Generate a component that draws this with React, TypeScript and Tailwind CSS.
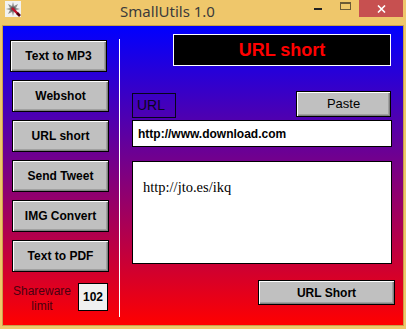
import type { ReactNode } from "react"

const bevel =
  "border border-black bg-[#c0c0c0] shadow-[inset_1px_1px_0_#ffffff,inset_-1px_-1px_0_#808080,inset_-2px_-2px_0_#a0a0a0] flex items-center justify-center text-black"

function SideButton({ children, first }: { children: ReactNode; first?: boolean }) {
  return (
    <div className={`${bevel} ${first ? "" : "ml-[2px]"} h-[32px] w-[97px] text-[12px] font-bold`}>
      {children}
    </div>
  )
}

function AppIcon() {
  return (
    <svg width="16" height="16" viewBox="0 0 16 16">
      <rect x="0" y="0" width="16" height="16" fill="#f2f2f2" />
      <path d="M8 1 L9 5 L13 3 L11 7 L15 8 L11 9 L13 13 L9 11 L8 15 L7 11 L3 13 L5 9 L1 8 L5 7 L3 3 L7 5 Z" fill="#8c8c8c" />
      <circle cx="8" cy="8" r="2.5" fill="#5f5f5f" />
      <path d="M7 7 L13 13" stroke="#c0102a" strokeWidth="2.4" />
      <path d="M12 12 L15 15" stroke="#500010" strokeWidth="2.6" />
    </svg>
  )
}

export default function App() {
  return (
    <div className="flex h-[329px] w-[406px] flex-col bg-[#efc76b] font-['Liberation_Sans',Arial,sans-serif]">
      {/* title bar */}
      <div className="relative flex h-[25px] items-start">
        <div className="ml-[5px] mt-[1px]">
          <AppIcon />
        </div>
        <div className="flex-1 pt-[2px] text-center font-['Noto_Sans',sans-serif] text-[15px] leading-[18px] text-[#3b3b3b]">
          SmallUtils 1.0
        </div>
        <div className="mr-[3px] flex items-start">
          <div className="mt-[8px] h-[2px] w-[8px] bg-[#222]" />
          <div className="ml-[18px] mt-[2px] h-[8px] w-[11px] border border-[#6b5a36] border-t-2" />
          <div className="ml-[8px] flex h-[17px] w-[44px] items-center justify-center bg-[#c75050]">
            <svg width="9" height="8" viewBox="0 0 9 8">
              <path d="M1 0.5 L8 7.5 M8 0.5 L1 7.5" stroke="#fff" strokeWidth="1.6" />
            </svg>
          </div>
        </div>
      </div>

      {/* client */}
      <div className="mx-[2px] border border-[#c9a04c]">
        <div className="flex h-[299px] w-[400px] bg-[linear-gradient(to_bottom,#0000ff,#ff0000)]">
          <div className="flex w-[116px] flex-col gap-[8px] pl-[7px] pt-[14px]">
            <SideButton first>Text to MP3</SideButton>
            <SideButton>Webshot</SideButton>
            <SideButton>URL short</SideButton>
            <SideButton>Send Tweet</SideButton>
            <SideButton>IMG Convert</SideButton>
            <SideButton>Text to PDF</SideButton>
            <div className="mt-[3px] flex items-start">
              <div className="ml-[1px] mt-[1px] w-[62px] text-center text-[12px] leading-[15px] text-[#4a0010]">
                Shareware
                <br />
                limit
              </div>
              <div className="ml-[5px] flex h-[28px] w-[30px] items-center justify-center border border-black bg-[#f0f0f0] text-[12px] font-bold text-black">
                102
              </div>
            </div>
          </div>

          <div className="mt-[13px] h-[278px] w-px bg-white" />

          <div className="ml-[12px] flex w-[263px] flex-col pt-[8px]">
            <div className="ml-[41px] flex h-[32px] w-[218px] items-center justify-center border border-white bg-black text-[18px] font-bold text-[#ff0000]">
              URL short
            </div>
            <div className="mt-[25px] flex w-[259px] items-start justify-between">
              <div className="mt-[2px] flex h-[25px] w-[44px] items-center border border-[#05051a] pl-[4px] text-[14px] text-[#0a0620]">
                URL
              </div>
              <div className={`${bevel} h-[26px] w-[95px] text-[13px]`}>Paste</div>
            </div>
            <div className="mt-[2px] flex h-[27px] w-[260px] items-center border border-black bg-white pl-[5px] text-[12px] font-bold text-black">
              http://www.download.com
            </div>
            <div className="mt-[14px] h-[103px] w-[260px] border border-black bg-white pl-[10px] pt-[17px] font-['Liberation_Serif',serif] text-[14.5px] leading-[16px] text-black">
              http://jto.es/ikq
            </div>
            <div className={`${bevel} ml-[126px] mt-[16px] h-[25px] w-[137px] text-[12px] font-bold`}>
              URL Short
            </div>
          </div>
        </div>
      </div>
    </div>
  )
}
